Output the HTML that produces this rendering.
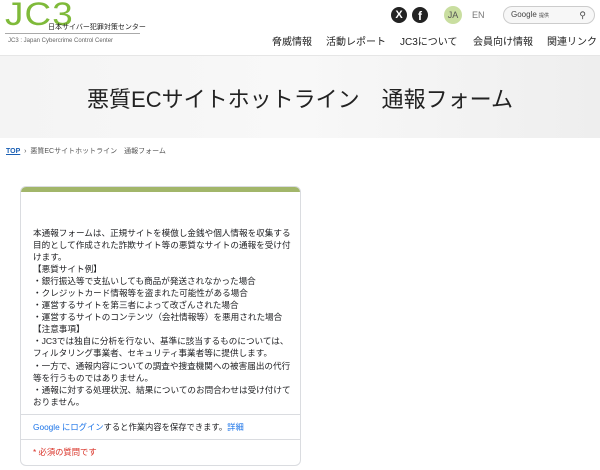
<!DOCTYPE html>
<html><head><meta charset="utf-8"><style>
*{margin:0;padding:0;box-sizing:border-box}
body{width:600px;height:470px;overflow:hidden;background:#fff;font-family:"Liberation Sans","Noto Sans CJK JP",sans-serif;color:#222;position:relative}
.a{position:absolute}
.nav span{position:absolute;top:33px;font-size:10px;color:#222;white-space:nowrap}
.card{left:20px;top:186px;width:281px;height:280px;border:1px solid #dadce0;border-radius:6px;overflow:hidden;background:#fff}
.body{font-size:8.6px;line-height:12.05px;padding:35px 0 0 12px;color:#202124}
</style></head><body>
<div class="a" style="left:0;top:0;width:600px;height:56px;background:#fff;border-bottom:1px solid #e6e6e6"></div>
<div class="a" style="left:5px;top:-2px;font-size:32px;color:#7fba3a;font-weight:300;letter-spacing:1px;line-height:32px;transform:scaleX(1.15);transform-origin:left">JC3</div>
<div class="a" style="left:48px;top:22px;font-size:7px;white-space:nowrap">日本サイバー犯罪対策センター</div>
<div class="a" style="left:5px;top:33px;width:135px;height:1px;background:#aaa"></div>
<div class="a" style="left:8px;top:38px;font-size:6px;color:#666;white-space:nowrap">JC3 : Japan Cybercrime Control Center</div>
<div class="a" style="left:391px;top:7px;width:16px;height:16px;border-radius:50%;background:#222;color:#fff;font-size:11px;text-align:center;line-height:16px;font-weight:bold">X</div>
<div class="a" style="left:412px;top:7px;width:16px;height:16px;border-radius:50%;background:#222;color:#fff;font-size:12px;text-align:center;line-height:18px;font-weight:bold">f</div>
<div class="a" style="left:444px;top:6px;width:18px;height:18px;border-radius:50%;background:#c9dea0;font-size:9px;text-align:center;line-height:18px;color:#555">JA</div>
<div class="a" style="left:472px;top:10px;font-size:9px;color:#777">EN</div>
<div class="a" style="left:503px;top:6px;width:92px;height:18px;border:1px solid #ccc;border-radius:9px;background:#f7f7f7;font-size:8px;line-height:16px;padding-left:7px;color:#444">Google <span style="font-size:5px">提供</span><span style="position:absolute;right:8px;top:0;font-size:9px">⚲</span></div>
<div class="nav"><span style="left:272px">脅威情報</span><span style="left:326px">活動レポート</span><span style="left:400px">JC3について</span><span style="left:473px">会員向け情報</span><span style="left:547px">関連リンク</span></div>
<div class="a" style="left:0;top:56px;width:600px;height:82px;background:linear-gradient(90deg,#f4f4f4,#f8f8f8 50%,#eeeeee)"></div>
<div class="a" style="left:0;top:82px;width:600px;text-align:center;font-size:22px;color:#222;white-space:nowrap">悪質ECサイトホットライン　通報フォーム</div>
<div class="a" style="left:6px;top:146px;font-size:7px;color:#555;white-space:nowrap"><span style="color:#1a5fb4;text-decoration:underline;font-weight:bold">TOP</span> &nbsp;›&nbsp; 悪質ECサイトホットライン　通報フォーム</div>
<div class="a card">
<div style="height:5px;background:#a2b66a"></div>
<div class="body">本通報フォームは、正規サイトを模倣し金銭や個人情報を収集する<br>目的として作成された詐欺サイト等の悪質なサイトの通報を受け付<br>けます。<br>【悪質サイト例】<br>・銀行振込等で支払いしても商品が発送されなかった場合<br>・クレジットカード情報等を盗まれた可能性がある場合<br>・運営するサイトを第三者によって改ざんされた場合<br>・運営するサイトのコンテンツ（会社情報等）を悪用された場合<br>【注意事項】<br>・JC3では独自に分析を行ない、基準に該当するものについては、<br>フィルタリング事業者、セキュリティ事業者等に提供します。<br>・一方で、通報内容についての調査や捜査機関への被害届出の代行<br>等を行うものではありません。<br>・通報に対する処理状況、結果についてのお問合わせは受け付けて<br>おりません。</div>
<div style="position:absolute;left:0;top:227px;width:100%;height:1px;background:#dadce0"></div>
<div style="position:absolute;left:12px;top:234px;font-size:8.3px;white-space:nowrap;color:#202124"><span style="color:#1a73e8">Google にログイン</span>すると作業内容を保存できます。<span style="color:#1a73e8">詳細</span></div>
<div style="position:absolute;left:0;top:252px;width:100%;height:1px;background:#dadce0"></div>
<div style="position:absolute;left:12px;top:259px;font-size:8.3px;color:#d93025">* 必須の質問です</div>
</div>
</body></html>
